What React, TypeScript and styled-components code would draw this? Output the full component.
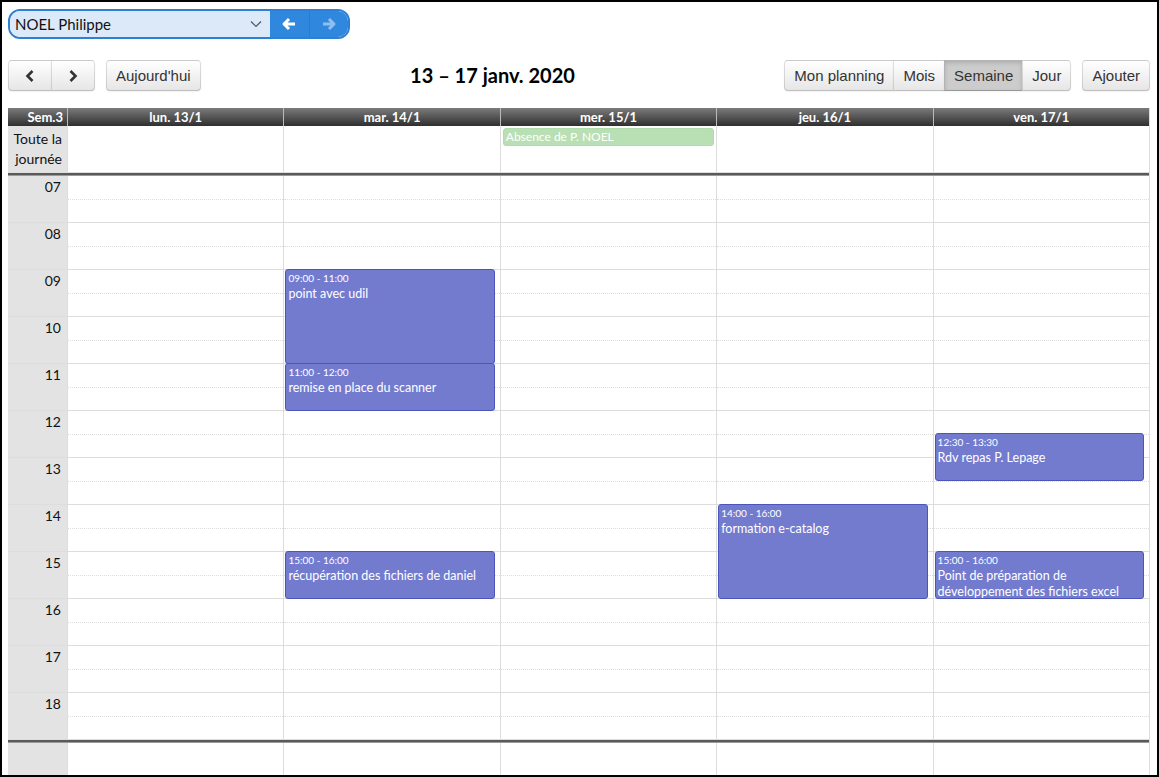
import styled, { createGlobalStyle } from "styled-components";

const GlobalStyle = createGlobalStyle`
    html, body {
        margin: 0;
        padding: 0;
        background: #fff;
        overflow: hidden;
    }
`;

const HOUR = 47;
const FIRST_HOUR = 7;
const hours = ["07", "08", "09", "10", "11", "12", "13", "14", "15", "16", "17", "18"];
const days = ["lun. 13/1", "mar. 14/1", "mer. 15/1", "jeu. 16/1", "ven. 17/1"];

type CalEvent = { start: number; end: number; time: string; title: string };

const events: CalEvent[][] = [
    [],
    [
        { start: 9, end: 11, time: "09:00 - 11:00", title: "point avec udil" },
        { start: 11, end: 12, time: "11:00 - 12:00", title: "remise en place du scanner" },
        { start: 15, end: 16, time: "15:00 - 16:00", title: "récupération des fichiers de daniel" },
    ],
    [],
    [{ start: 14, end: 16, time: "14:00 - 16:00", title: "formation e-catalog" }],
    [
        { start: 12.5, end: 13.5, time: "12:30 - 13:30", title: "Rdv repas P. Lepage" },
        { start: 15, end: 16, time: "15:00 - 16:00", title: "Point de préparation de développement des fichiers excel" },
    ],
];

const Frame = styled.div`
    width: 1159px;
    height: 777px;
    box-sizing: border-box;
    border: 2px solid #000;
    padding: 7px 7px 0 6px;
    overflow: hidden;
    background: #fff;
    font-family: Lato, "Liberation Sans", sans-serif;
`;

const Picker = styled.div`
    display: flex;
    width: 342px;
    height: 30px;
    box-sizing: border-box;
    border: 2px solid #2e80d5;
    border-radius: 12px;
    overflow: hidden;
`;

const PickerSelect = styled.div`
    width: 260px;
    display: flex;
    align-items: center;
    justify-content: space-between;
    background: #dce9f8;
    padding: 0 8px 0 5px;
    box-sizing: border-box;
    font-size: 15px;
    color: #111;
`;

const PickerArrow = styled.div<{ $first?: boolean }>`
    flex: 1;
    display: flex;
    align-items: center;
    justify-content: center;
    background: #3088de;
    border-left: ${(p) => (p.$first ? "none" : "1px solid #2a7bcc")};
`;

const Toolbar = styled.div`
    margin-top: 21px;
    height: 31px;
    display: flex;
    align-items: center;
    justify-content: space-between;
`;

const Side = styled.div`
    display: flex;
    gap: 11px;
`;

const Group = styled.div`
    display: flex;
`;

const Button = styled.button<{ $active?: boolean; $w?: number }>`
    height: 31px;
    box-sizing: border-box;
    padding: 0 9px;
    ${(p) => (p.$w ? `width: ${p.$w}px;` : "")}
    display: flex;
    align-items: center;
    justify-content: center;
    font-family: "Liberation Sans", Arial, sans-serif;
    font-size: 15px;
    color: #333;
    background: ${(p) => (p.$active ? "#cccccc" : "linear-gradient(#ffffff, #e6e6e6)")};
    border: 1px solid rgba(0, 0, 0, 0.12);
    border-bottom-color: rgba(0, 0, 0, 0.25);
    box-shadow: ${(p) =>
        p.$active
            ? "inset 0 2px 4px rgba(0,0,0,0.15), 0 1px 2px rgba(0,0,0,0.05)"
            : "inset 0 1px 0 rgba(255,255,255,0.2), 0 1px 2px rgba(0,0,0,0.05)"};
    border-radius: 0;
    margin-left: -1px;
    &:first-child {
        margin-left: 0;
        border-top-left-radius: 4px;
        border-bottom-left-radius: 4px;
    }
    &:last-child {
        border-top-right-radius: 4px;
        border-bottom-right-radius: 4px;
    }
`;

const Title = styled.h2`
    margin: 0;
    font-family: Lato, sans-serif;
    font-weight: 700;
    font-size: 20px;
    color: #000;
    position: relative;
    top: -1px;
`;

const Calendar = styled.div`
    margin-top: 17px;
    width: 1142px;
    box-sizing: border-box;
    border-right: 1px solid #ddd;
`;

const Row = styled.div<{ $h: number }>`
    display: grid;
    grid-template-columns: 59px repeat(5, 1fr);
    height: ${(p) => p.$h}px;
    box-sizing: border-box;
`;

const HeadRow = styled(Row)`
    background: linear-gradient(#7b7b7b, #2f2f2f);
`;

const HeadCell = styled.div<{ $axis?: boolean }>`
    color: #fff;
    font-weight: 700;
    font-size: 13px;
    line-height: 18px;
    text-align: ${(p) => (p.$axis ? "right" : "center")};
    padding-right: ${(p) => (p.$axis ? "4px" : "0")};
    border-left: ${(p) => (p.$axis ? "none" : "1px solid #bbb")};
`;

const AxisCell = styled.div`
    background: #e3e3e3;
    text-align: right;
    padding-right: 6px;
    font-size: 14px;
    color: #111;
    box-sizing: border-box;
    border-bottom: 1px solid #ddd;
`;

const AllDayAxis = styled(AxisCell)`
    line-height: 20px;
    padding-top: 3px;
    padding-right: 5px;
`;

const HourAxis = styled(AxisCell)`
    line-height: 20px;
    padding-top: 1px;
`;

const DayCell = styled.div<{ $slots?: boolean }>`
    position: relative;
    border-left: 1px solid #ddd;
    border-bottom: 1px solid #ddd;
    box-sizing: border-box;
    ${(p) =>
        p.$slots
            ? `&::after {
        content: "";
        position: absolute;
        left: 0;
        right: 0;
        top: 23px;
        border-top: 1px dotted #ddd;
    }`
            : ""}
`;

const AllDayEvent = styled.div`
    position: absolute;
    top: 2px;
    left: 2px;
    right: 2px;
    height: 18px;
    box-sizing: border-box;
    background: #b9e0b4;
    border: 1px solid #b0dbab;
    border-radius: 3px;
    color: #fff;
    font-size: 12px;
    line-height: 16px;
    padding-left: 2px;
`;

const Divider = styled.div`
    height: 3px;
    background: #5a5a5a;
    border-bottom: 1px solid #9a9a9a;
    box-sizing: border-box;
`;

const Body = styled.div`
    position: relative;
`;

const EventLayer = styled.div`
    position: absolute;
    top: 0;
    left: 0;
    right: 0;
    height: ${hours.length * HOUR}px;
    display: grid;
    grid-template-columns: 59px repeat(5, 1fr);
    pointer-events: none;
`;

const EventColumn = styled.div`
    position: relative;
    border-left: 1px solid transparent;
`;

const EventBox = styled.div<{ $top: number; $h: number }>`
    position: absolute;
    left: 1px;
    right: 5px;
    top: ${(p) => p.$top}px;
    height: ${(p) => p.$h}px;
    box-sizing: border-box;
    background: #737bcf;
    border: 1px solid #4b55bc;
    border-radius: 3px;
    color: #fff;
    padding: 2px 2px 0;
    overflow: hidden;
`;

const EventTime = styled.div`
    font-size: 10px;
    line-height: 13px;
`;

const EventTitle = styled.div`
    font-size: 12.5px;
    line-height: 16px;
    margin-top: 1px;
`;

function Chevron({ dir }: { dir: "left" | "right" }) {
    return (
        <svg width="10" height="14" viewBox="0 0 10 14">
            <polyline
                points={dir === "left" ? "7.5,2 2.5,7 7.5,12" : "2.5,2 7.5,7 2.5,12"}
                fill="none"
                stroke="#333"
                strokeWidth="2.6"
            />
        </svg>
    );
}

function Arrow({ dir, color }: { dir: "left" | "right"; color: string }) {
    const d = dir === "left" ? "M8 3 L3 8 L8 13 M3.5 8 H14" : "M8 3 L13 8 L8 13 M12.5 8 H2";
    return (
        <svg width="16" height="16" viewBox="0 0 16 16">
            <path d={d} fill="none" stroke={color} strokeWidth="3" strokeLinejoin="round" />
        </svg>
    );
}

export default function App() {
    return (
        <Frame>
            <GlobalStyle />
            <Picker>
                <PickerSelect>
                    <span>NOEL Philippe</span>
                    <svg width="12" height="8" viewBox="0 0 12 8">
                        <polyline points="1,1.5 6,6.5 11,1.5" fill="none" stroke="#555" strokeWidth="1.2" />
                    </svg>
                </PickerSelect>
                <PickerArrow $first>
                    <Arrow dir="left" color="#ffffff" />
                </PickerArrow>
                <PickerArrow>
                    <Arrow dir="right" color="#8fbff0" />
                </PickerArrow>
            </Picker>

            <Toolbar>
                <Side>
                    <Group>
                        <Button $w={44}><Chevron dir="left" /></Button>
                        <Button $w={44}><Chevron dir="right" /></Button>
                    </Group>
                    <Group>
                        <Button>Aujourd'hui</Button>
                    </Group>
                </Side>
                <Title>13 – 17 janv. 2020</Title>
                <Side>
                    <Group>
                        <Button>Mon planning</Button>
                        <Button>Mois</Button>
                        <Button $active>Semaine</Button>
                        <Button>Jour</Button>
                    </Group>
                    <Group>
                        <Button>Ajouter</Button>
                    </Group>
                </Side>
            </Toolbar>

            <Calendar>
                <HeadRow $h={18}>
                    <HeadCell $axis>Sem.3</HeadCell>
                    {days.map((d) => (
                        <HeadCell key={d}>{d}</HeadCell>
                    ))}
                </HeadRow>
                <Row $h={47}>
                    <AllDayAxis>Toute la<br />journée</AllDayAxis>
                    {days.map((d, i) => (
                        <DayCell key={d}>
                            {i === 2 && <AllDayEvent>Absence de P. NOEL</AllDayEvent>}
                        </DayCell>
                    ))}
                </Row>
                <Divider />
                <Body>
                    {hours.map((h) => (
                        <Row key={h} $h={HOUR}>
                            <HourAxis>{h}</HourAxis>
                            {days.map((d) => (
                                <DayCell key={d} $slots />
                            ))}
                        </Row>
                    ))}
                    <EventLayer>
                        <div />
                        {events.map((list, i) => (
                            <EventColumn key={i}>
                                {list.map((ev) => (
                                    <EventBox
                                        key={ev.time}
                                        $top={Math.floor((ev.start - FIRST_HOUR) * HOUR) - 1}
                                        $h={Math.round((ev.end - ev.start) * HOUR) + 1}
                                    >
                                        <EventTime>{ev.time}</EventTime>
                                        <EventTitle>{ev.title}</EventTitle>
                                    </EventBox>
                                ))}
                            </EventColumn>
                        ))}
                    </EventLayer>
                </Body>
                <Divider />
                <Row $h={60}>
                    <AxisCell />
                    {days.map((d) => (
                        <DayCell key={d} />
                    ))}
                </Row>
            </Calendar>
        </Frame>
    );
}
